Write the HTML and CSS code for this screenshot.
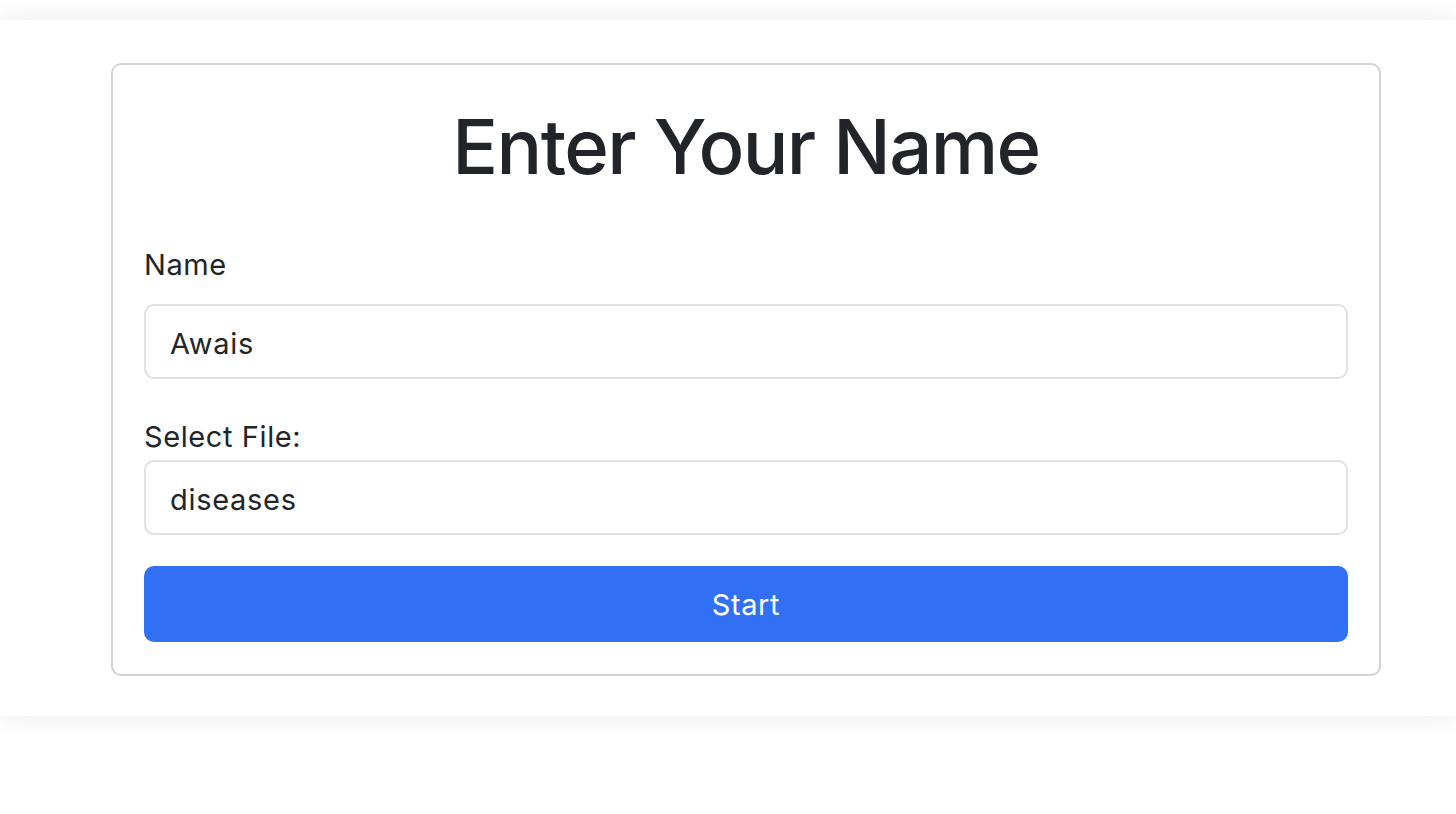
FILE: index.html
```html
<!DOCTYPE html>
<html lang="en">
<head>
<meta charset="utf-8">
<title>Enter Your Name</title>
<link rel="stylesheet" href="styles.css">
</head>
<body>
<section class="panel">
  <form class="card">
    <h1 class="title">Enter Your Name</h1>
    <label class="label label-name" for="name">Name</label>
    <input class="field" id="name" type="text" value="Awais">
    <label class="label label-file" for="file">Select File:</label>
    <input class="field" id="file" type="text" value="diseases">
    <button class="btn" type="button">Start</button>
  </form>
</section>
</body>
</html>
```

FILE: styles.css
```css
* { box-sizing: border-box; }
html, body { margin: 0; background: #fff; }
body {
  padding: 20px 0 60px;
  font-family: Inter, "Noto Sans", "Liberation Sans", sans-serif;
  color: #212529;
}
.panel {
  position: relative;
  height: 696px;
  background: #fff;
  box-shadow: 0 0 24px rgba(0, 0, 0, 0.09);
  padding: 43px 75px 0 111px;
}
.card {
  display: flex;
  flex-direction: column;
  width: 1270px;
  border: 2px solid #d3d3d3;
  border-radius: 10px;
  padding: 34px 31px 32px;
}
.title {
  margin: 0;
  font-size: 76px;
  line-height: 94px;
  font-weight: 500;
  text-align: center;
  letter-spacing: -1.6px;
}
.label {
  font-size: 29px;
  line-height: 42px;
  letter-spacing: 0.6px;
}
.label-name { margin-top: 51px; margin-bottom: 18px; }
.label-file { margin-top: 37px; margin-bottom: 2px; }
.field {
  height: 75px;
  width: 100%;
  border: 2px solid #dee2e6;
  border-radius: 10px;
  padding: 3px 24px 0;
  font: inherit;
  font-size: 29px;
  letter-spacing: 0.7px;
  color: #212529;
  background: #fff;
  outline: none;
}
.btn {
  margin-top: 31px;
  height: 76px;
  width: 100%;
  border: 0;
  border-radius: 10px;
  background: #316ff4;
  color: #fff;
  font: inherit;
  font-size: 29px;
  letter-spacing: 0.6px;
  padding-top: 2px;
  cursor: pointer;
}
```
